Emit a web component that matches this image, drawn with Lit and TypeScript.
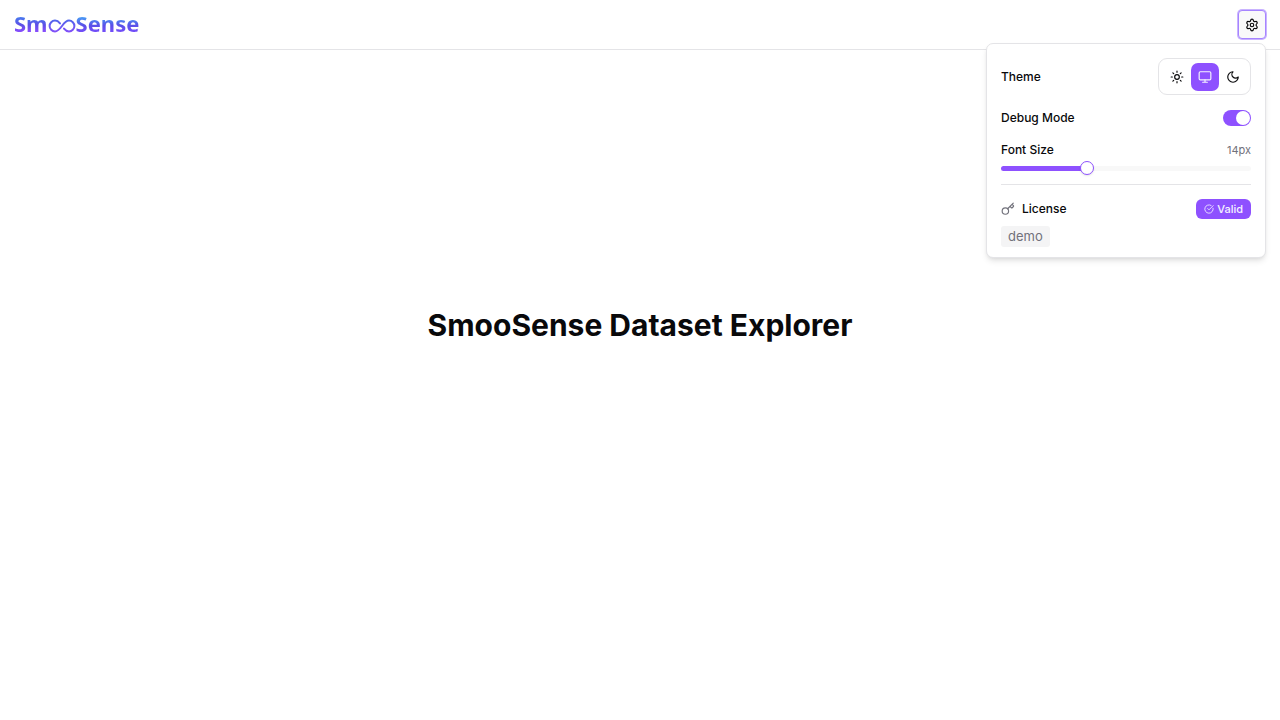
import { LitElement, html, css, svg } from "lit";
import { customElement, state } from "lit/decorators.js";

const icon = (shapes: unknown, cls = "icon") => html`
  <svg class=${cls} viewBox="0 0 24 24" fill="none" stroke="currentColor" stroke-width="2"
    stroke-linecap="round" stroke-linejoin="round" aria-hidden="true">${shapes}</svg>`;

const gear = svg`<path d="M9.671 4.136a2.34 2.34 0 0 1 4.659 0 2.34 2.34 0 0 0 3.319 1.915 2.34 2.34 0 0 1 2.33 4.033 2.34 2.34 0 0 0 0 3.831 2.34 2.34 0 0 1-2.33 4.033 2.34 2.34 0 0 0-3.319 1.915 2.34 2.34 0 0 1-4.659 0 2.34 2.34 0 0 0-3.32-1.915 2.34 2.34 0 0 1-2.33-4.033 2.34 2.34 0 0 0 0-3.831A2.34 2.34 0 0 1 6.35 6.051a2.34 2.34 0 0 0 3.319-1.915"/><circle cx="12" cy="12" r="3"/>`;
const sun = svg`<circle cx="12" cy="12" r="4"/><path d="M12 2v2M12 20v2M4.93 4.93l1.41 1.41M17.66 17.66l1.41 1.41M2 12h2M20 12h2M6.34 17.66l-1.41 1.41M19.07 4.93l-1.41 1.41"/>`;
const monitor = svg`<rect width="20" height="14" x="2" y="3" rx="2"/><path d="M8 21h8M12 17v4"/>`;
const moon = svg`<path d="M12 3a6 6 0 0 0 9 9 9 9 0 1 1-9-9Z"/>`;
const key = svg`<path d="m15.5 7.5 2.3 2.3a1 1 0 0 0 1.4 0l2.1-2.1a1 1 0 0 0 0-1.4L19 4M21 2l-9.6 9.6"/><circle cx="7.5" cy="15.5" r="5.5"/>`;
const check = svg`<path d="M21.801 10A10 10 0 1 1 17 3.335"/><path d="m9 11 3 3L22 4"/>`;

@customElement("brand-logo")
class BrandLogo extends LitElement {
  static styles = css`
    :host { display: block; }
    .logo {
      display: flex;
      align-items: center;
      padding-bottom: 4px;
      color: #5b50ee;
      font: 700 22px/24px "Noto Sans", sans-serif;
      text-decoration: none;
    }
    .word {
      background: linear-gradient(to bottom, #4a78ee 28%, #5c4fe6 58%, #8b4dff 88%);
      -webkit-background-clip: text;
      background-clip: text;
      color: transparent;
    }
    .tail { background-image: linear-gradient(to bottom, #4a98f4 28%, #5a50e8 60%, #7c4dff 96%); }
    .loop { width: 28px; height: 14px; margin-top: 7px; }
  `;
  render() {
    return html`
      <a class="logo" href="#" aria-label="SmooSense">
        <span class="word">Sm</span>
        <svg class="loop" viewBox="0 0 28 14" fill="none" aria-hidden="true">
          <defs>
            <linearGradient id="g" x1="0" y1="0" x2="0" y2="14" gradientUnits="userSpaceOnUse">
              <stop offset="0" stop-color="#4c66ea" /><stop offset="1" stop-color="#864dfa" />
            </linearGradient>
          </defs>
          <path d="M12 4.4C10.5 2.5 9 1.6 7 1.6a5.4 5.4 0 0 0 0 10.8c3 0 4.8-2.4 7-5.4s4-5.4 7-5.4a5.4 5.4 0 0 1 0 10.8c-2 0-3.5-.9-5-2.8"
            stroke="url(#g)" stroke-width="2" stroke-linecap="round" />
        </svg>
        <span class="word tail">Sense</span>
      </a>`;
  }
}

@customElement("settings-panel")
class SettingsPanel extends LitElement {
  @state() private theme = "system";
  @state() private size = 14;

  static styles = css`
    :host {
      display: block;
      box-sizing: border-box;
      padding: 14px 14px 10px;
      border: 1px solid #e4e4e7;
      border-radius: 7px;
      background: #fff;
      box-shadow: 0 4px 6px -1px rgb(0 0 0 / 0.1), 0 2px 4px -2px rgb(0 0 0 / 0.1);
      color: #09090b;
      font: 500 12px/18px Inter, sans-serif;
    }
    .row { display: flex; align-items: center; justify-content: space-between; }
    .debug { margin-top: 14px; }
    .size { margin-top: 14px; }
    .themes {
      display: flex;
      padding: 4px 3px 3px 4px;
      border: 1px solid #e4e4e7;
      border-radius: 9px;
    }
    .theme {
      display: grid;
      place-items: center;
      width: 28px;
      height: 28px;
      padding: 0;
      border: 0;
      border-radius: 7px;
      background: transparent;
      color: #09090b;
    }
    .theme[aria-pressed="true"] { background: #8e51ff; color: #f5f3ff; }
    .icon { display: block; width: 14px; height: 14px; }
    .switch {
      appearance: none;
      display: flex;
      width: 28px;
      height: 16px;
      margin: 0;
      padding: 1px;
      box-sizing: border-box;
      border-radius: 8px;
      background: #e4e4e7;
    }
    .switch::before {
      content: "";
      width: 14px;
      height: 14px;
      border-radius: 50%;
      background: #fff;
    }
    .switch:checked { justify-content: flex-end; background: #8e51ff; }
    .value { color: #71717b; font-size: 11px; font-weight: 400; }
    .slider {
      appearance: none;
      display: block;
      width: 100%;
      height: 14px;
      margin: 2px 0 0;
      background: transparent;
    }
    .slider::-webkit-slider-runnable-track {
      height: 5px;
      border-radius: 3px;
      background: linear-gradient(to right, #8e51ff var(--fill), #f8f8f8 var(--fill));
    }
    .slider::-webkit-slider-thumb {
      appearance: none;
      box-sizing: border-box;
      width: 14px;
      height: 14px;
      margin-top: -5px;
      border: 1px solid #8e51ff;
      border-radius: 50%;
      background: #fff;
      box-shadow: 0 1px 2px rgb(0 0 0 / 0.1);
    }
    .rule { height: 1px; margin: 9px 0 14px; border: 0; background: #e4e4e7; }
    .license { display: flex; align-items: center; gap: 7px; }
    .key { display: block; width: 14px; height: 14px; color: #71717b; }
    .badge {
      display: flex;
      align-items: center;
      gap: 3px;
      padding: 1px 8px;
      border-radius: 6px;
      background: #8e51ff;
      color: #f5f3ff;
      font-size: 11px;
    }
    .tick { display: block; width: 10px; height: 10px; }
    .code {
      display: inline-block;
      margin-top: 7px;
      padding: 0 7px;
      border-radius: 3px;
      background: #f4f4f5;
      color: #71717b;
      font: 400 13px/21px Inter, sans-serif;
      vertical-align: top;
    }
  `;

  private themeButton(id: string, label: string, shapes: unknown) {
    return html`<button class="theme" type="button" aria-label=${label}
      aria-pressed=${this.theme === id} @click=${() => (this.theme = id)}>${icon(shapes)}</button>`;
  }

  render() {
    const fill = ((this.size - 12) / 6) * 100;
    return html`
      <div class="row">
        <span id="theme">Theme</span>
        <div class="themes" role="group" aria-labelledby="theme">
          ${this.themeButton("light", "Light", sun)}
          ${this.themeButton("system", "System", monitor)}
          ${this.themeButton("dark", "Dark", moon)}
        </div>
      </div>
      <div class="row debug">
        <label for="debug">Debug Mode</label>
        <input class="switch" id="debug" type="checkbox" role="switch" checked />
      </div>
      <div class="row size">
        <label for="size">Font Size</label>
        <span class="value">${this.size}px</span>
      </div>
      <input class="slider" id="size" type="range" min="12" max="18" .value=${String(this.size)}
        style="--fill: ${fill}%"
        @input=${(e: Event) => (this.size = Number((e.target as HTMLInputElement).value))} />
      <hr class="rule" />
      <div class="row">
        <span class="license">${icon(key, "key")}License</span>
        <span class="badge">${icon(check, "tick")}Valid</span>
      </div>
      <code class="code">demo</code>`;
  }
}

@customElement("app-root")
class AppRoot extends LitElement {
  @state() private open = true;

  static styles = css`
    :host {
      display: flex;
      flex-direction: column;
      min-height: 100vh;
      background: #fff;
      color: #09090b;
      font-family: Inter, sans-serif;
    }
    .bar {
      display: flex;
      align-items: center;
      justify-content: space-between;
      padding: 10px 14px;
      border-bottom: 1px solid #e4e4e7;
    }
    .menu { position: relative; }
    .trigger {
      display: grid;
      place-items: center;
      box-sizing: border-box;
      width: 28px;
      height: 29px;
      padding: 0;
      border: 1px solid #a684ff;
      border-radius: 4px;
      outline: 0;
      background: #f9f9fa;
      color: #09090b;
      box-shadow: 0 0 0 1px #c9b3ff;
    }
    .icon { display: block; width: 14px; height: 14px; }
    .panel { position: absolute; top: calc(100% + 4px); right: 0; width: 280px; z-index: 1; }
    .main {
      flex: 1;
      display: flex;
      flex-direction: column;
      align-items: center;
      justify-content: center;
      padding: 0 14px 120px;
    }
    .title { margin: 0; font-size: 30px; line-height: 40px; font-weight: 700; text-align: center; }
  `;

  render() {
    return html`
      <header class="bar">
        <brand-logo></brand-logo>
        <div class="menu">
          <button class="trigger" type="button" aria-label="Settings" aria-expanded=${this.open}
            @click=${() => (this.open = !this.open)}>${icon(gear)}</button>
          ${this.open ? html`<settings-panel class="panel"></settings-panel>` : null}
        </div>
      </header>
      <main class="main"><h1 class="title">SmooSense Dataset Explorer</h1></main>`;
  }
}
